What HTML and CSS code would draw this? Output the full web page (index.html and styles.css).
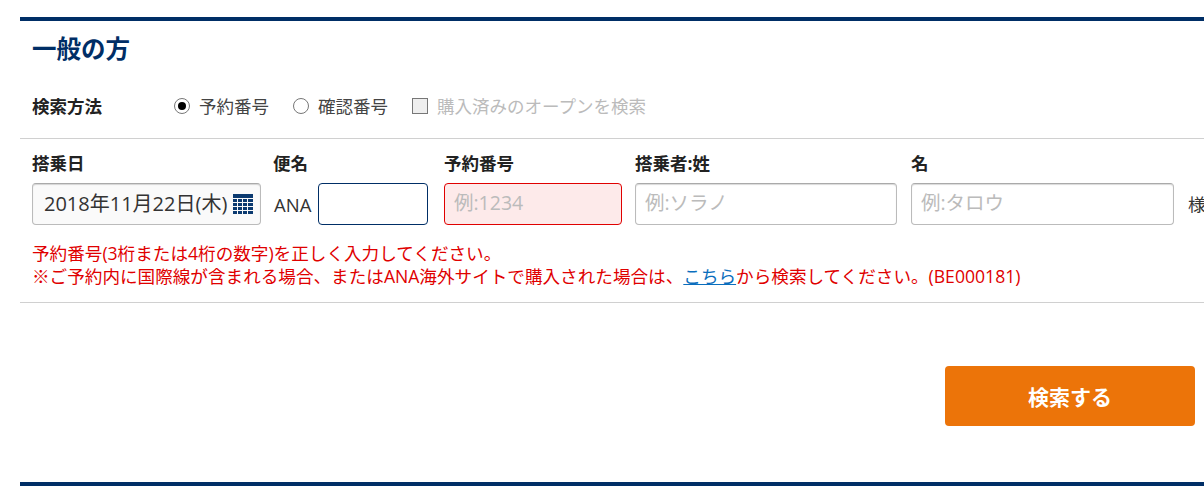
FILE: index.html
```html
<!DOCTYPE html>
<html lang="ja">
<head>
    <meta charset="UTF-8">
    <title>一般の方</title>
    <link rel="stylesheet" href="styles.css">
</head>
<body>
    <div class="section">
        <h2>一般の方</h2>
        <div class="method">
            <span class="method-title">検索方法</span>
            <span class="radio checked"></span>
            <span class="method-label first">予約番号</span>
            <span class="radio"></span>
            <span class="method-label second">確認番号</span>
            <span class="checkbox"></span>
            <span class="method-label disabled">購入済みのオープンを検索</span>
        </div>
        <div class="form">
            <div class="fields">
                <div class="field date">
                    <label>搭乗日</label>
                    <div class="input date-input">
                        <span>2018年11月22日(木)</span>
                        <svg class="cal" width="20" height="20" viewBox="0 0 20 20">
                            <rect x="0" y="0" width="20" height="4" fill="#0b3a70"/>
                            <path d="M0 5h4v3H0zM5 5h4v3H5zM10 5h4v3h-4zM15 5h5v3h-5zM0 9h4v3H0zM5 9h4v3H5zM10 9h4v3h-4zM15 9h5v3h-5zM0 13h4v3H0zM5 13h4v3H5zM10 13h4v3h-4zM15 13h5v3h-5zM0 17h4v3H0zM5 17h4v3H5zM10 17h4v3h-4zM15 17h5v3h-5z" fill="#0b3a70"/>
                        </svg>
                    </div>
                </div>
                <div class="field flight">
                    <label>便名</label>
                    <div class="flight-row">
                        <span class="ana">ANA</span>
                        <div class="input focus"></div>
                    </div>
                </div>
                <div class="field number">
                    <label>予約番号</label>
                    <div class="input error">例:1234</div>
                </div>
                <div class="field sei">
                    <label>搭乗者:姓</label>
                    <div class="input hint">例:ソラノ</div>
                </div>
                <div class="field mei">
                    <label>名</label>
                    <div class="input hint">例:タロウ</div>
                </div>
                <div class="field sama">
                    <span>様</span>
                </div>
            </div>
            <p class="message">予約番号(3桁または4桁の数字)を正しく入力してください。<br>※ご予約内に国際線が含まれる場合、またはANA海外サイトで購入された場合は、<a href="#">こちら</a>から検索してください。(BE000181)</p>
        </div>
        <div class="actions">
            <button class="btn">検索する</button>
        </div>
    </div>
</body>
</html>
```

FILE: styles.css
```css
html, body {
    height: 100%;
    overflow: hidden;
}
body {
    margin: 0;
    padding: 17px 0 0 20px;
    box-sizing: border-box;
    background: #fff;
    color: #333;
    font-family: "Open Sans", "Noto Sans CJK JP", sans-serif;
    font-size: 17.5px;
}
.section {
    width: 1300px;
    height: 469px;
    box-sizing: border-box;
    border-top: 4px solid #002e66;
    border-bottom: 4px solid #002e66;
}
h2 {
    margin: 0;
    padding: 11px 0 0 12px;
    height: 38px;
    line-height: 34px;
    font-size: 24.5px;
    font-weight: bold;
    color: #002e66;
}
.method {
    display: flex;
    align-items: center;
    height: 35px;
    margin-top: 18px;
    padding-left: 12px;
    padding-bottom: 15px;
    border-bottom: 1px solid #d0d0d0;
    box-sizing: content-box;
}
.method-title {
    width: 142px;
    font-weight: bold;
    color: #222;
}
.method-label {
    color: #444;
    white-space: nowrap;
}
.method-label.first {
    margin-right: 24px;
}
.method-label.second {
    margin-right: 24px;
}
.method-label.disabled {
    color: #bbb;
}
.radio {
    width: 14px;
    height: 14px;
    margin-right: 9px;
    border: 1px solid #777;
    border-radius: 50%;
    background: #fff;
    position: relative;
}
.radio.checked::after {
    content: "";
    position: absolute;
    top: 3px;
    left: 3px;
    width: 8px;
    height: 8px;
    border-radius: 50%;
    background: #000;
}
.checkbox {
    width: 14px;
    height: 14px;
    margin-right: 9px;
    border: 1px solid #777;
    background: #eee;
}
.form {
    height: 163px;
    border-bottom: 1px solid #d0d0d0;
    box-sizing: content-box;
}
.fields {
    display: flex;
    padding: 12px 0 0 12px;
}
.field label {
    display: block;
    height: 21px;
    margin-bottom: 11px;
    line-height: 24px;
    font-weight: bold;
    color: #222;
}
.date {
    width: 229px;
    margin-right: 12px;
}
.flight {
    width: 155px;
    margin-right: 16px;
}
.number {
    width: 178px;
    margin-right: 13px;
}
.sei {
    width: 262px;
    margin-right: 14px;
}
.mei {
    width: 263px;
    margin-right: 14px;
}
.sama {
    padding-top: 32px;
    line-height: 42px;
    white-space: nowrap;
}
.input {
    height: 42px;
    box-sizing: border-box;
    padding: 0 9px;
    line-height: 38px;
    border: 1px solid #bbb;
    border-top-color: #aaa;
    border-radius: 4px;
    box-shadow: inset 0 1px 1px rgba(0, 0, 0, 0.15);
    background: #fff;
    font-size: 19.5px;
    white-space: nowrap;
}
.date-input {
    display: flex;
    justify-content: space-between;
    align-items: center;
    padding: 0 7px 0 11px;
    background: #fafafa;
    color: #333;
    font-size: 20px;
}
.cal {
    flex: none;
}
.flight-row {
    display: flex;
    align-items: center;
}
.ana {
    width: 45px;
    padding-left: 1px;
    box-sizing: border-box;
    color: #333;
    font-size: 18.5px;
}
.focus {
    width: 110px;
    border-color: #002e66;
    box-shadow: none;
}
.error {
    border-color: #e00000;
    background: #fdeaea;
    box-shadow: none;
    color: #bbb;
}
.hint {
    color: #bbb;
}
.message {
    margin: 17px 0 0 12px;
    line-height: 23px;
    font-size: 17.6px;
    color: #e00000;
    white-space: nowrap;
}
.message a {
    color: #0a6ebd;
}
.actions {
    display: flex;
    justify-content: flex-start;
    padding: 63px 0 0 925px;
}
.btn {
    width: 250px;
    height: 60px;
    border: none;
    border-radius: 4px;
    background: #ec7409;
    color: #fff;
    font-family: inherit;
    font-size: 21px;
    font-weight: bold;
}
```
